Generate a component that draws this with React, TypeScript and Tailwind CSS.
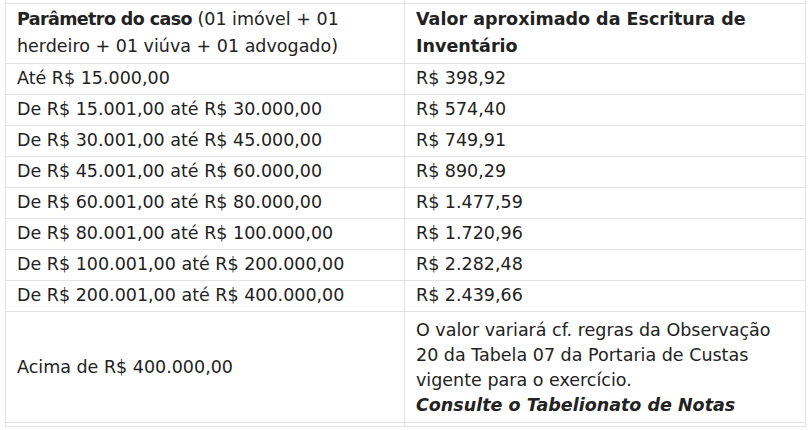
const rows = [
  ['Até R$ 15.000,00', 'R$ 398,92'],
  ['De R$ 15.001,00 até R$ 30.000,00', 'R$ 574,40'],
  ['De R$ 30.001,00 até R$ 45.000,00', 'R$ 749,91'],
  ['De R$ 45.001,00 até R$ 60.000,00', 'R$ 890,29'],
  ['De R$ 60.001,00 até R$ 80.000,00', 'R$ 1.477,59'],
  ['De R$ 80.001,00 até R$ 100.000,00', 'R$ 1.720,96'],
  ['De R$ 100.001,00 até R$ 200.000,00', 'R$ 2.282,48'],
  ['De R$ 200.001,00 até R$ 400.000,00', 'R$ 2.439,66']
];

const cell = 'border border-[#e3e3e3] px-[11px] py-[2.5px] align-middle';

export default function App() {
  return (
    <div className="min-h-[430px] bg-white pl-[5px] text-[17.5px] leading-[25px] text-[#222]" style={{ fontFamily: '"DejaVu Sans", Verdana, sans-serif' }}>
      <table className="w-[800px] table-fixed border-collapse text-left">
        <colgroup>
          <col className="w-[399px]" />
          <col className="w-[401px]" />
        </colgroup>
        <tbody>
          <tr className="h-[3px]">
            <td className="border border-[#e3e3e3] border-t-0 p-0" />
            <td className="border border-[#e3e3e3] border-t-0 p-0" />
          </tr>
          <tr>
            <td className={`${cell} leading-[27px]`}>
              <strong className="tracking-[-0.6px]">Parâmetro do caso</strong> (01 imóvel + 01
              <br />
              herdeiro + 01 viúva + 01 advogado)
            </td>
            <td className={`${cell} leading-[27px]`}>
              <strong>
                Valor aproximado da Escritura de
                <br />
                Inventário
              </strong>
            </td>
          </tr>
          {rows.map(([range, value]) => (
            <tr key={range}>
              <td className={cell}>{range}</td>
              <td className={cell}>{value}</td>
            </tr>
          ))}
          <tr>
            <td className={`${cell} pt-[6px] pb-[4px]`}>Acima de R$ 400.000,00</td>
            <td className={`${cell} pt-[6px] pb-[4px]`}>
              O valor variará cf. regras da Observação
              <br />
              20 da Tabela 07 da Portaria de Custas
              <br />
              vigente para o exercício.
              <br />
              <strong>
                <em>Consulte o Tabelionato de Notas</em>
              </strong>
            </td>
          </tr>
          <tr className="h-[4px]">
            <td className="border border-[#e3e3e3] p-0" />
            <td className="border border-[#e3e3e3] p-0" />
          </tr>
        </tbody>
      </table>
    </div>
  );
}
